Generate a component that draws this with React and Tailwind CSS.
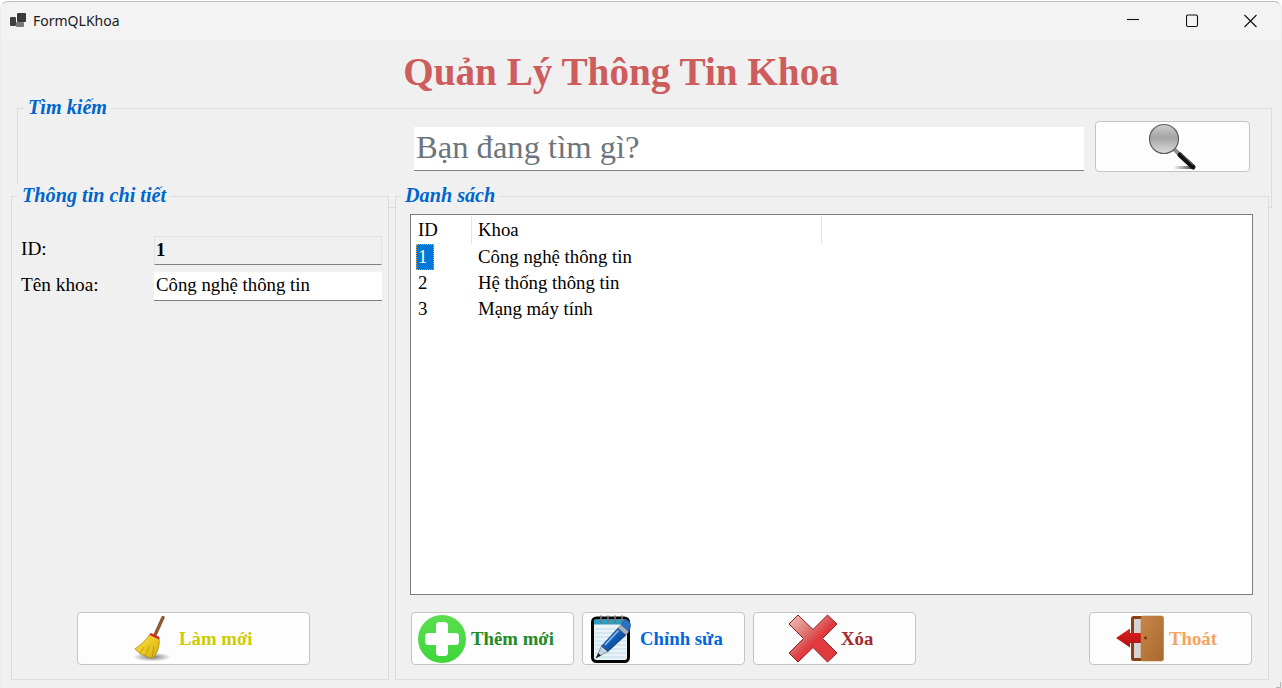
const serif = "font-['Liberation_Serif','Times_New_Roman',serif]";

function AppIcon() {
  return (
    <svg width="17" height="15" viewBox="0 0 17 15">
      <rect x="7" y="0" width="9" height="9" rx="1" fill="#3a3a3a" />
      <rect x="0" y="4" width="6" height="9" rx="1" fill="#3f3f3f" />
      <rect x="6" y="9" width="8" height="5" rx="1" fill="#777" />
    </svg>
  );
}

function WindowControls() {
  return (
    <div className="flex items-center">
      <svg width="59" height="14" viewBox="0 0 59 14" className="text-[#111]">
        <path d="M0 5.5H12" stroke="currentColor" strokeWidth="1.1" />
      </svg>
      <svg width="58" height="14" viewBox="0 0 58 14" className="text-[#111]">
        <rect x="0.5" y="1" width="11" height="11.5" rx="1.5" fill="none" stroke="currentColor" strokeWidth="1.1" />
      </svg>
      <svg width="13" height="14" viewBox="0 0 13 14" className="text-[#111]">
        <path d="M0.5 1L12.5 13M12.5 1L0.5 13" stroke="currentColor" strokeWidth="1.1" fill="none" />
      </svg>
    </div>
  );
}

function SearchIcon() {
  return (
    <svg width="50" height="48" viewBox="0 0 50 48">
      <defs>
        <linearGradient id="lens" x1="0" y1="0" x2="0" y2="1">
          <stop offset="0" stopColor="#cfcfcf" />
          <stop offset="0.45" stopColor="#a4a4a4" />
          <stop offset="1" stopColor="#dcdcdc" />
        </linearGradient>
        <linearGradient id="magshadow" x1="0" y1="0" x2="1" y2="0">
          <stop offset="0" stopColor="#444" stopOpacity="0" />
          <stop offset="1" stopColor="#333" />
        </linearGradient>
      </defs>
      <rect x="25" y="43" width="22" height="3" rx="1.5" fill="url(#magshadow)" />
      <path d="M26 26L32 32" stroke="#8f8f8f" strokeWidth="4" />
      <path d="M32 32L45 44" stroke="#111" strokeWidth="5" strokeLinecap="round" />
      <path d="M33 30.5L45 42" stroke="#777" strokeWidth="0.8" />
      <circle cx="16" cy="16" r="14.5" fill="url(#lens)" stroke="#5f5f5f" strokeWidth="1.2" />
    </svg>
  );
}

function BroomIcon() {
  return (
    <svg width="38" height="46" viewBox="0 0 38 46">
      <defs>
        <radialGradient id="broomshadow">
          <stop offset="0" stopColor="#777" />
          <stop offset="1" stopColor="#777" stopOpacity="0" />
        </radialGradient>
        <linearGradient id="straw" x1="0" y1="0" x2="1" y2="1">
          <stop offset="0" stopColor="#ffe93a" />
          <stop offset="1" stopColor="#d8ac10" />
        </linearGradient>
      </defs>
      <ellipse cx="20" cy="41" rx="19" ry="4.5" fill="url(#broomshadow)" />
      <path d="M31 1.5L23 19" stroke="#8f5a30" strokeWidth="3.4" strokeLinecap="round" />
      <path
        d="M18 18L27 22C28 29 26 36 21 42C18 42 15 41 13 39.5L11 39L8 37.5L3 33C8 29 14 25 18 18Z"
        fill="url(#straw)"
        stroke="#a9860f"
        strokeWidth="0.8"
      />
      <path d="M17.5 19L27 23.5L27.5 21L19 17Z" fill="#c8302a" />
      <path d="M12 31L8 37M17 30L14 39M22 30L20 41" stroke="#b9930f" strokeWidth="0.8" fill="none" />
    </svg>
  );
}

function PlusIcon() {
  return (
    <svg width="48" height="48" viewBox="0 0 48 48">
      <defs>
        <linearGradient id="plusbg" x1="0" y1="0" x2="0" y2="1">
          <stop offset="0" stopColor="#5ade4f" />
          <stop offset="1" stopColor="#3ed63a" />
        </linearGradient>
      </defs>
      <circle cx="24" cy="24" r="24" fill="url(#plusbg)" />
      <rect x="7" y="18" width="34" height="12" rx="3.5" fill="#fff" />
      <rect x="18" y="7" width="12" height="34" rx="3.5" fill="#fff" />
    </svg>
  );
}

function NoteIcon() {
  return (
    <svg width="41" height="48" viewBox="0 0 41 48">
      <defs>
        <linearGradient id="pen" x1="0" y1="0" x2="1" y2="1">
          <stop offset="0" stopColor="#3f8fe0" />
          <stop offset="0.5" stopColor="#1259b0" />
          <stop offset="1" stopColor="#0a2f70" />
        </linearGradient>
      </defs>
      <rect x="1.5" y="3" width="36" height="43.5" rx="4" fill="#eaf3f8" stroke="#050505" strokeWidth="3" />
      <rect x="3" y="4.5" width="33" height="5" fill="#2a9ec4" />
      <path d="M4 14H35M4 18H35M4 22H35M4 26H35M4 30H35M4 34H35M4 38H35M4 42H35" stroke="#b5d3e6" strokeWidth="0.8" />
      <path d="M10 1V8M17 1V8M24 1V8M31 1V8" stroke="#777" strokeWidth="1.6" strokeLinecap="round" />
      <path d="M5 43L10.5 31L17 36.5Z" fill="#c4d2de" stroke="#35536f" strokeWidth="0.5" />
      <path d="M5 43L7.2 38.2L10 40.6Z" fill="#111" />
      <path d="M10.5 31L27 13L35 20L17 36.5Z" fill="url(#pen)" stroke="#0a2b63" strokeWidth="0.6" />
      <path d="M27 13L30 9.5L38 16.5L35 20Z" fill="#a9b3c0" stroke="#666" strokeWidth="0.5" />
      <path d="M30 9.5L34 5C36 4 40 7 39.5 11L38 16.5Z" fill="#2a72c8" stroke="#123e80" strokeWidth="0.5" />
      <path d="M14 30L27.5 15.5" stroke="#8fc0f0" strokeWidth="1.5" />
    </svg>
  );
}

function CrossIcon() {
  return (
    <svg width="50" height="49" viewBox="0 0 50 49">
      <defs>
        <linearGradient id="crossbg" x1="0" y1="0" x2="1" y2="1">
          <stop offset="0" stopColor="#f2c4bc" />
          <stop offset="0.4" stopColor="#dc6a66" />
          <stop offset="0.55" stopColor="#e03a3e" />
          <stop offset="1" stopColor="#e2393c" />
        </linearGradient>
      </defs>
      <path
        d="M10 1L25 15.5L39.5 1L49 10L34.5 24.5L49 39L39.5 48L25 33.5L10 48L1 39L15.5 24.5L1 10Z"
        fill="url(#crossbg)"
        stroke="#8e1f22"
        strokeWidth="1"
        strokeLinejoin="round"
      />
    </svg>
  );
}

function DoorIcon() {
  return (
    <svg width="48" height="47" viewBox="0 0 48 47">
      <defs>
        <linearGradient id="doorbg" x1="0" y1="0" x2="1" y2="1">
          <stop offset="0" stopColor="#c9864a" />
          <stop offset="1" stopColor="#a8682c" />
        </linearGradient>
        <linearGradient id="arrowbg" x1="0" y1="0" x2="0" y2="1">
          <stop offset="0" stopColor="#e0201f" />
          <stop offset="1" stopColor="#b01012" />
        </linearGradient>
      </defs>
      <rect x="15" y="1" width="22" height="45" rx="2.5" fill="#8a3f14" />
      <rect x="18" y="4" width="9" height="39" fill="#d4d4d4" />
      <path d="M0 23L14 13.5V18H26V28H14V32.5Z" fill="url(#arrowbg)" />
      <rect x="25" y="1" width="22.5" height="45" rx="2" fill="url(#doorbg)" stroke="#b87a40" strokeWidth="0.6" />
      <circle cx="29.5" cy="23" r="1.4" fill="#6d2c0c" />
    </svg>
  );
}

function ActionButton({ className, text, textColor, children }) {
  return (
    <button className={`flex h-[53px] shrink-0 items-center rounded-[4px] border border-[#c4c4c4] bg-[#fdfdfd] ${className}`}>
      {children}
      <span className={`pt-[2px] text-[18.8px] font-bold leading-none ${textColor}`}>{text}</span>
    </button>
  );
}

function Group({ title, className, legendClass = "ml-[6px]", children }) {
  return (
    <div className={`bg-[#f0f0f0] ${className}`}>
      <fieldset className="flex h-full flex-col border border-[#dcdcdc]">
        <legend className={`h-[24px] px-[4px] text-[20.2px] font-bold italic leading-[23px] text-[#0066cc] ${legendClass}`}>
          {title}
        </legend>
        {children}
      </fieldset>
    </div>
  );
}

const rows = [
  { id: 1, name: "Công nghệ thông tin" },
  { id: 2, name: "Hệ thống thông tin" },
  { id: 3, name: "Mạng máy tính" },
];

export default function App() {
  return (
    <div className={`h-[688px] w-[1282px] overflow-hidden bg-white pt-[1px] ${serif}`}>
      <div className="h-[700px] rounded-t-[8px] border border-[#bdbdbd] border-x-[#ececec] bg-[#f0f0f0]">
        {/* title bar */}
        <div className="flex h-[37px] items-center rounded-t-[8px] bg-[#f3f3f3] pl-[9px] pr-[24px]">
          <AppIcon />
          <span className="ml-[6px] font-['Noto_Sans',sans-serif] text-[14px] text-[#1a1a1a]">FormQLKhoa</span>
          <div className="ml-auto">
            <WindowControls />
          </div>
        </div>

        <h1 className="flex h-[57px] items-center justify-center pr-[40px] pt-[8px] text-[39.2px] font-bold leading-none text-[#cd5c5c]">
          Quản Lý Thông Tin Khoa
        </h1>

        {/* search */}
        <Group title="Tìm kiếm" className="ml-[16px] mr-[9px] h-[112px]">
          <div className="flex items-start pl-[396px]">
            <div className="mt-[7px] flex h-[44px] w-[670px] items-center border-b border-[#808080] bg-white pb-[2px] pl-[2px] text-[32.6px] leading-none text-[#6c757d]">
              Bạn đang tìm gì?
            </div>
            <button className="ml-[11px] mt-[1px] flex h-[51px] w-[155px] items-center justify-center rounded-[4px] border border-[#c4c4c4] bg-[#fdfdfd]">
              <SearchIcon />
            </button>
          </div>
        </Group>

        <div className="relative mt-[-24px] flex pl-[10px]">
          {/* details */}
          <Group title="Thông tin chi tiết" className="h-[496px] w-[378px]">
            <div className="flex flex-1 flex-col pl-[9px] text-[18.8px] leading-none text-black">
              <div className="mt-[28px] flex items-center">
                <label className="w-[133px] pb-[4px] text-[19.3px]">ID:</label>
                <div className="flex h-[29px] w-[228px] items-center border border-[#e2e2e2] border-b-[#808080] pl-[1px] font-bold">1</div>
              </div>
              <div className="mt-[7px] flex items-center">
                <label className="w-[133px] pb-[4px] text-[19.3px]">Tên khoa:</label>
                <div className="flex h-[29px] w-[228px] items-center border-b border-[#808080] bg-white pb-[2px] pl-[2px]">
                  Công nghệ thông tin
                </div>
              </div>
              <ActionButton className="mb-[14px] ml-[56px] mt-auto w-[233px] pl-[54px]" text="Làm mới" textColor="text-[#cccc00]">
                <span className="mr-[9px] flex"><BroomIcon /></span>
              </ActionButton>
            </div>
          </Group>

          {/* list */}
          <Group title="Danh sách" legendClass="ml-[5px]" className="ml-[6px] h-[496px] w-[874px]">
            <div className="flex flex-1 flex-col pl-[14px]">
              <div className="mt-[6px] h-[381px] w-[843px] border border-[#7a7d88] bg-white text-[18.8px] leading-none text-black">
                <div className="mt-[1px] flex h-[28px] w-[411px] items-center">
                  <div className="flex h-full w-[61px] items-center border-r border-[#e5e5e5] pl-[7px]">ID</div>
                  <div className="flex h-full w-[350px] items-center border-r border-[#e5e5e5] pl-[6px]">Khoa</div>
                </div>
                {rows.map((row, i) => (
                  <div key={row.id} className="flex h-[26px] items-center">
                    <div className="flex h-full w-[61px] items-center pl-[5px]">
                      <span
                        className={
                          i === 0
                            ? "flex h-full w-[18px] items-center border border-dotted border-[#e8a33d] bg-[#0078d7] pl-[1px] text-white"
                            : "pl-[2px]"
                        }
                      >
                        {row.id}
                      </span>
                    </div>
                    <div className="pl-[6px]">{row.name}</div>
                  </div>
                ))}
              </div>
              <div className="mt-[17px] flex pl-[1px] pr-[16px]">
                <ActionButton className="w-[163px] pl-[6px]" text="Thêm mới" textColor="text-[#228b22]">
                  <span className="mr-[5px] flex"><PlusIcon /></span>
                </ActionButton>
                <ActionButton className="ml-[8px] w-[163px] pl-[8px]" text="Chỉnh sửa" textColor="text-[#0066dd]">
                  <span className="mr-[8px] flex"><NoteIcon /></span>
                </ActionButton>
                <ActionButton className="ml-[8px] w-[163px] pl-[34px]" text="Xóa" textColor="text-[#a52a2a]">
                  <span className="mr-[3px] flex"><CrossIcon /></span>
                </ActionButton>
                <ActionButton className="ml-auto w-[163px] pl-[26px]" text="Thoát" textColor="text-[#f4a460]">
                  <span className="mr-[5px] flex"><DoorIcon /></span>
                </ActionButton>
              </div>
            </div>
          </Group>
        </div>

        {/* resize corner */}
        <div className="mt-[2px] flex justify-end">
          <div className="h-[6px] w-[5px] border-b border-r border-[#b5b5b5]" />
        </div>
      </div>
    </div>
  );
}
